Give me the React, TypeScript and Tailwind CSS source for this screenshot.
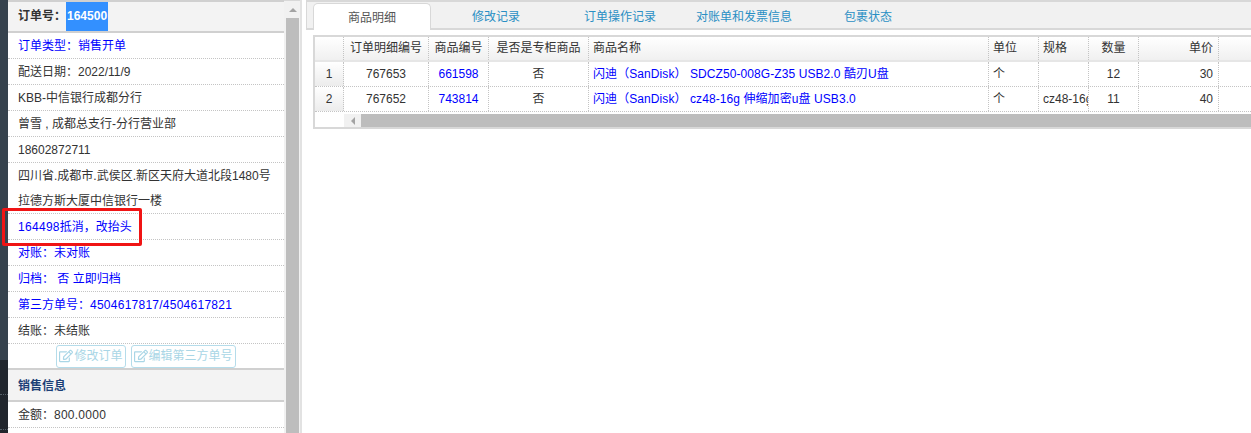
import { FaRegEdit } from "react-icons/fa";

const font = { fontFamily: '"Liberation Sans", "Noto Sans CJK SC", sans-serif' };

const columns = [
  { title: "", w: "w-[29px]", pad: "px-[5px]" },
  { title: "订单明细编号", w: "w-[85px]", pad: "px-[5px]" },
  { title: "商品编号", w: "w-[60px]", pad: "px-[5px]" },
  { title: "是否是专柜商品", w: "w-[100px]", pad: "px-[5px]" },
  { title: "商品名称", w: "w-[400px]", pad: "px-[4px]", align: "text-left" },
  { title: "单位", w: "w-[50px]", pad: "px-[4px]", align: "text-left" },
  { title: "规格", w: "w-[50px]", pad: "px-[4px]", align: "text-left" },
  { title: "数量", w: "w-[50px]", pad: "px-[5px]" },
  { title: "单价", w: "w-[80px]", pad: "px-[5px]", align: "text-right" },
  { title: "", w: "w-[80px]", pad: "px-[5px]" },
];

const rows = [
  ["1", "767653", "661598", "否", "闪迪（SanDisk） SDCZ50-008G-Z35 USB2.0 酷刃U盘", "个", "", "12", "30"],
  ["2", "767652", "743814", "否", "闪迪（SanDisk） cz48-16g 伸缩加密u盘 USB3.0", "个", "cz48-16g", "11", "40"],
];

const tabs = ["修改记录", "订单操作记录", "对账单和发票信息", "包裹状态"];

function InfoRow({ children, blue }: { children: React.ReactNode; blue?: boolean }) {
  return (
    <div className={`h-[26px] overflow-hidden border-b border-dotted border-[#c4c4c4] px-[10px] leading-[27px] whitespace-nowrap ${blue ? "text-[#0000ff]" : ""}`}>
      {children}
    </div>
  );
}

function EditButton({ label }: { label: string }) {
  return (
    <span className="flex h-[23px] items-center rounded-[3px] border border-[#b5dcea] px-[2px] text-[#a9d6e6]">
      <FaRegEdit className="mr-[1px] h-[14px] w-[14px]" />
      {label}
    </span>
  );
}

export default function App() {
  return (
    <div className="flex h-[433px] w-[1251px] overflow-hidden bg-white text-[12px] text-[#333]" style={font}>
      {/* Window behind the panel */}
      <div className="flex w-[8px] shrink-0 flex-col">
        <div className="h-[360px] bg-[#36424d]" />
        <div className="flex-1 bg-[#21262d]">
          <div className="mt-[34px] border-b border-dotted border-[#566069]" />
          <div className="mt-[34px] border-b border-dotted border-[#566069]" />
        </div>
      </div>

      {/* Order info */}
      <div className="w-[276px] shrink-0 overflow-hidden border-t-2 border-[#d0d0d0]">
        <div className="flex h-[31px] items-stretch border-b-2 border-[#d0d0d0] bg-[#f3f3f3] pl-[10px] font-bold leading-[29px]">
          <span>订单号：</span>
          <span className="bg-[#3390ff] px-[1px] text-white">164500</span>
        </div>
        <InfoRow blue>订单类型：销售开单</InfoRow>
        <InfoRow>配送日期：2022/11/9</InfoRow>
        <InfoRow>KBB-中信银行成都分行</InfoRow>
        <InfoRow>曾雪 , 成都总支行-分行营业部</InfoRow>
        <InfoRow>18602872711</InfoRow>
        <div className="h-[51px] border-b border-dotted border-[#c4c4c4] px-[10px] pt-[1px] leading-[25px] whitespace-nowrap">
          <div>四川省.成都市.武侯区.新区天府大道北段1480号</div>
          <div>拉德方斯大厦中信银行一楼</div>
        </div>
        <InfoRow blue><span className="tracking-[0.3px]">164498</span>抵消，改抬头</InfoRow>
        <InfoRow blue>对账：未对账</InfoRow>
        <InfoRow blue>归档： 否 立即归档</InfoRow>
        <InfoRow blue>第三方单号：<span className="tracking-[0.25px]">4504617817/4504617821</span></InfoRow>
        <InfoRow>结账：未结账</InfoRow>
        <div className="flex h-[26px] items-center justify-center gap-[5px] border-b-2 border-[#d0d0d0]">
          <EditButton label="修改订单" />
          <EditButton label="编辑第三方单号" />
        </div>
        <div className="h-[32px] border-b-2 border-[#d0d0d0] bg-[#f3f3f3] px-[10px] font-bold leading-[32px] text-[#1c3f77]">销售信息</div>
        <InfoRow>金额：<span className="tracking-[0.25px]">800.0000</span></InfoRow>
      </div>

      {/* Panel scrollbar */}
      <div className="flex w-[16px] shrink-0 flex-col items-end border-t border-[#d8d8d8] bg-[#f1f1f1] pr-[1px]">
        <div className="mr-[2px] mt-[7px] h-0 w-0 border-x-[4px] border-b-[4px] border-x-transparent border-b-[#a3a3a3]" />
        <div className="mt-[6px] w-[13px] flex-1 bg-[#bdbdbd]" />
      </div>
      <div className="w-[2px] shrink-0 bg-[#e2e2e2]" />

      {/* Detail area */}
      <div className="min-w-0 flex-1 pl-[4px]">
        <div className="flex h-[30px] border-y-2 border-l border-[#d8d8d8] bg-[#f1f1f1] pl-[6px]">
          <div className="mt-[1px] h-[27px] w-[118px] rounded-t-[5px] border border-b-0 border-[#d8d8d8] bg-white text-center leading-[28px] text-[#555]">商品明细</div>
          <div className="ml-[3px] flex">
            {tabs.map((t) => (
              <div key={t} className="w-[124px] text-center leading-[30px] text-[#2a8fc4]">{t}</div>
            ))}
          </div>
        </div>

        <div className="ml-[7px] mt-[5px] h-[94px] overflow-hidden border-y-2 border-l-2 border-[#d8d8d8]">
          <div className="flex h-[25px] w-[1000px] border-b-2 border-[#e6e6e6] bg-gradient-to-b from-white to-[#f0f0f0]">
            {columns.map((c, i) => (
              <div key={i} className={`${c.w} ${c.pad} shrink-0 border-r border-dotted border-[#c4c4c4] leading-[22px] ${c.align ?? "text-center"}`}>{c.title}</div>
            ))}
          </div>
          {rows.map((r) => (
            <div key={r[0]} className="flex h-[25px] w-[1000px] border-b border-dotted border-[#c4c4c4]">
              {r.map((v, i) => (
                <div
                  key={i}
                  className={`${columns[i].w} ${columns[i].pad} shrink-0 overflow-hidden whitespace-nowrap border-r border-dotted border-[#c4c4c4] leading-[24px] ${columns[i].align ?? "text-center"} ${i === 0 ? "bg-gradient-to-b from-white to-[#ececec]" : ""} ${i === 2 || i === 4 ? "text-[#0000ff]" : ""} ${i === 4 ? "tracking-[0.08px]" : ""}`}
                >
                  {v}
                </div>
              ))}
            </div>
          ))}
          <div className="mt-[2px] flex h-[13px]">
            <div className="w-[29px]" />
            <div className="flex w-[17px] items-center justify-center bg-[#f1f1f1]">
              <div className="h-0 w-0 border-y-[4px] border-r-[4px] border-y-transparent border-r-[#a3a3a3]" />
            </div>
            <div className="flex-1 bg-[#bdbdbd]" />
          </div>
        </div>
      </div>

      {/* Annotation */}
      <div className="absolute left-[2px] top-[208px] h-[38px] w-[140px] rounded-[2px] border-[3px] border-[#f01414]" />
    </div>
  );
}
